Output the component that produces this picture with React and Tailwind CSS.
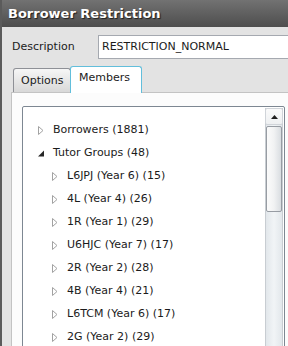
import React from "react";

const groups = [
  "L6JPJ (Year 6) (15)",
  "4L (Year 4) (26)",
  "1R (Year 1) (29)",
  "U6HJC (Year 7) (17)",
  "2R (Year 2) (28)",
  "4B (Year 4) (21)",
  "L6TCM (Year 6) (17)",
  "2G (Year 2) (29)",
];

function Collapsed() {
  return (
    <svg width="6" height="9" viewBox="0 0 6 9" className="shrink-0">
      <path d="M0.5 0.5 L5 4.5 L0.5 8.5 Z" fill="white" stroke="#a2a2a2" strokeWidth="1" />
    </svg>
  );
}

function Expanded() {
  return (
    <svg width="6" height="9" viewBox="0 0 6 9" className="shrink-0">
      <path d="M6 1.5 L6 7.5 L0 7.5 Z" fill="#262626" />
    </svg>
  );
}

function Row({ level, open, label }) {
  return (
    <div
      className={
        level === 0
          ? "h-[23px] flex items-center gap-[9px] pl-[15px]"
          : "h-[23px] flex items-center gap-[9px] pl-[29px]"
      }
    >
      {open ? <Expanded /> : <Collapsed />}
      <span className="text-[11px] text-[#1b1b1b] whitespace-nowrap">{label}</span>
    </div>
  );
}

export default function App() {
  return (
    <div className="w-[288px] h-[346px] overflow-hidden bg-[#e3e3e3] border-l-2 border-[#5b5b5b] flex flex-col font-['DejaVu_Sans',sans-serif] text-black">
      <div className="h-[27px] shrink-0 bg-gradient-to-b from-[#727272] to-[#4e4e4e] pl-[6px] flex items-center text-white font-bold text-[13px] [text-shadow:1px_1px_1px_#1e1e1e]">
        Borrower Restriction
      </div>

      <div className="mt-[8px] h-[24px] shrink-0 flex items-center pl-[10px]">
        <span className="w-[86px] text-[11px] text-[#1b1b1b]">Description</span>
        <div className="flex-1 h-full bg-white border border-[#a5a9b0] border-r-0 flex items-center pl-[3px] text-[11px] text-[#1b1b1b]">
          RESTRICTION_NORMAL
        </div>
      </div>

      <div className="mt-[7px] flex-1 flex flex-col pl-[9px]">
        <div className="h-[26px] shrink-0 flex items-start pl-[2px]">
          <div className="mt-[2px] h-[24px] w-[58px] border border-b-0 border-[#8e9096] rounded-t-[3px] bg-gradient-to-b from-[#f6f6f6] to-[#d8d8d8] pl-[7px] pt-[4px] text-[11px] text-[#1b1b1b]">
            Options
          </div>
          <div className="relative z-10 -ml-px h-[27px] w-[72px] border border-b-0 border-[#62bedb] rounded-t-[3px] bg-white pl-[8px] pt-[3px] text-[11px] text-[#1b1b1b]">
            Members
          </div>
        </div>

        <div className="flex-1 bg-[#fcfcfc] border-l border-t border-[#c3c3c3] pt-[13px] pl-[10px] pr-[3px]">
          <div className="h-[300px] bg-white border border-[#7d8792] rounded-[2px] flex">
            <div className="flex-1 pt-[12px]">
              <Row level={0} label="Borrowers (1881)" />
              <Row level={0} open label="Tutor Groups (48)" />
              {groups.map((g) => (
                <Row key={g} level={1} label={g} />
              ))}
            </div>

            <div className="w-[18px] mt-px mr-px flex flex-col border-x border-[#c8cdd2] bg-gradient-to-r from-[#e2e7eb] via-[#f1f4f6] to-[#e2e7eb]">
              <div className="h-[17px] -mx-px border border-[#d0d4d9] rounded-[2px] bg-gradient-to-b from-[#fafafa] to-[#eef0f2] flex items-center justify-center">
                <svg width="7" height="4" viewBox="0 0 7 4">
                  <path d="M3.5 0 L7 4 L0 4 Z" fill="#1f1f1f" />
                </svg>
              </div>
              <div className="h-[86px] mt-px border border-[#979ca3] rounded-[2px] bg-gradient-to-r from-[#fbfbfb] via-[#f1f2f3] to-[#d9dde1]" />
            </div>
          </div>
        </div>
      </div>
    </div>
  );
}
